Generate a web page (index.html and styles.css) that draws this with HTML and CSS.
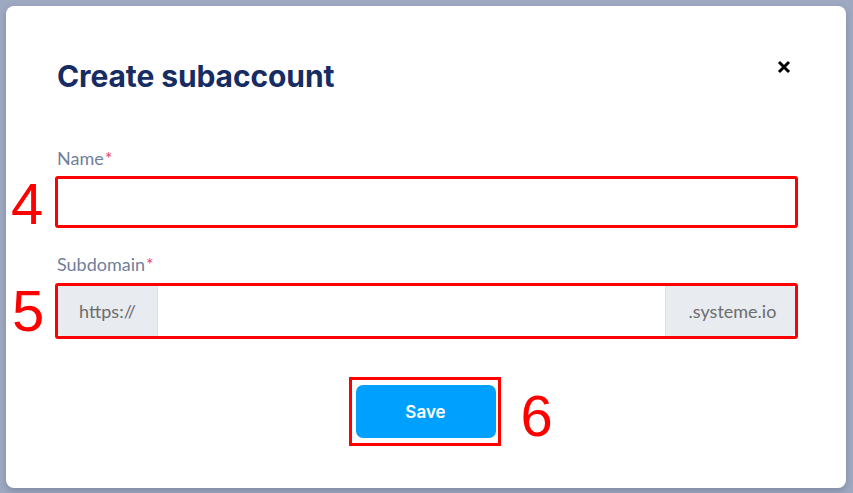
FILE: index.html
```html
<!DOCTYPE html>
<html lang="en">
<head>
<meta charset="utf-8">
<title>Create subaccount</title>
<link rel="stylesheet" href="styles.css">
</head>
<body>
<div class="modal">
  <div class="header">
    <h2 class="title">Create subaccount</h2>
    <button class="close" aria-label="Close">
      <svg width="14" height="14" viewBox="0 0 14 14"><path d="M2 2L12 12M12 2L2 12" stroke="#000" stroke-width="3" stroke-linecap="butt"/></svg>
    </button>
  </div>

  <div class="field">
    <label class="label">Name<span class="req">*</span></label>
    <div class="row">
      <span class="mark mark-4">4</span>
      <div class="frame">
        <input class="input" type="text">
      </div>
    </div>
  </div>

  <div class="field field-sub">
    <label class="label">Subdomain<span class="req">*</span></label>
    <div class="row">
      <span class="mark mark-5">5</span>
      <div class="frame">
        <div class="group">
          <span class="addon addon-pre">https://</span>
          <input class="input input-grow" type="text">
          <span class="addon addon-post">.systeme.io</span>
        </div>
      </div>
    </div>
  </div>

  <div class="actions">
    <div class="btn-frame">
      <button class="save">Save</button>
      <span class="mark mark-6">6</span>
    </div>
  </div>
</div>
</body>
</html>
```

FILE: styles.css
```css
html, body {
  margin: 0;
  padding: 0;
}
body {
  background: #9ea8c1;
  width: 853px;
  height: 493px;
  padding: 6px;
  box-sizing: border-box;
  overflow: hidden;
  font-family: Lato, "Open Sans", sans-serif;
}
.modal {
  width: 840px;
  height: 482px;
  box-sizing: border-box;
  background: #fff;
  border-radius: 8px;
  box-shadow: 0 3px 6px rgba(40, 50, 80, 0.25);
  padding: 52px 48px 0 49px;
}
.header {
  display: flex;
  justify-content: space-between;
  align-items: flex-start;
}
.title {
  margin: 0 0 0 2px;
  font-family: Inter, sans-serif;
  font-weight: 700;
  font-size: 30px;
  line-height: 36px;
  color: #162c63;
  letter-spacing: -0.1px;
}
.close {
  background: none;
  border: 0;
  padding: 0;
  margin: 2px 7px 0 0;
  width: 14px;
  height: 14px;
  display: flex;
}
.field {
  margin-top: 54px;
}
.field-sub {
  margin-top: 26px;
}
.label {
  display: block;
  margin-left: 2px;
  font-size: 18px;
  line-height: 20px;
  color: #717f9b;
}
.req {
  color: #e5446a;
  margin-left: 1px;
}
.row {
  position: relative;
  margin-top: 8px;
}
.field-sub .row {
  margin-top: 9px;
}
.frame {
  border: 3px solid #ff0000;
  border-radius: 3px;
}
.input {
  display: block;
  width: 100%;
  height: 46px;
  box-sizing: border-box;
  border: 0;
  border-radius: 4px;
  background: #fff;
  outline: none;
  padding: 0 16px;
}
.group {
  display: flex;
  height: 50px;
  border-radius: 4px;
  overflow: hidden;
}
.input-grow {
  flex: 1;
  height: 50px;
  width: auto;
}
.addon {
  display: flex;
  align-items: center;
  justify-content: center;
  background: #e8ebef;
  color: #6d6d6d;
  font-size: 18px;
}
.addon-pre {
  width: 100px;
  box-sizing: border-box;
  border-right: 1px solid #dde1e6;
}
.addon-post {
  width: 130px;
  box-sizing: border-box;
  border-left: 1px solid #dde1e6;
  padding-left: 4px;
}
.mark {
  position: absolute;
  font-family: "Liberation Sans", Arial, sans-serif;
  font-size: 58px;
  line-height: 1;
  color: #ff0000;
}
.mark-4 {
  left: -44px;
  top: -1px;
}
.mark-5 {
  left: -43px;
  top: -1px;
}
.actions {
  margin-top: 38px;
  display: flex;
  justify-content: center;
  padding-right: 4px;
}
.btn-frame {
  position: relative;
  border: 3px solid #ff0000;
  padding: 5px 2px 5px 4px;
  display: flex;
}
.save {
  width: 140px;
  height: 53px;
  border: 0;
  border-radius: 7px;
  background: #00a0ff;
  color: #fff;
  font-family: Inter, sans-serif;
  font-weight: 600;
  font-size: 17px;
  padding: 0;
}
.mark-6 {
  left: 169px;
  top: 7px;
}
```
